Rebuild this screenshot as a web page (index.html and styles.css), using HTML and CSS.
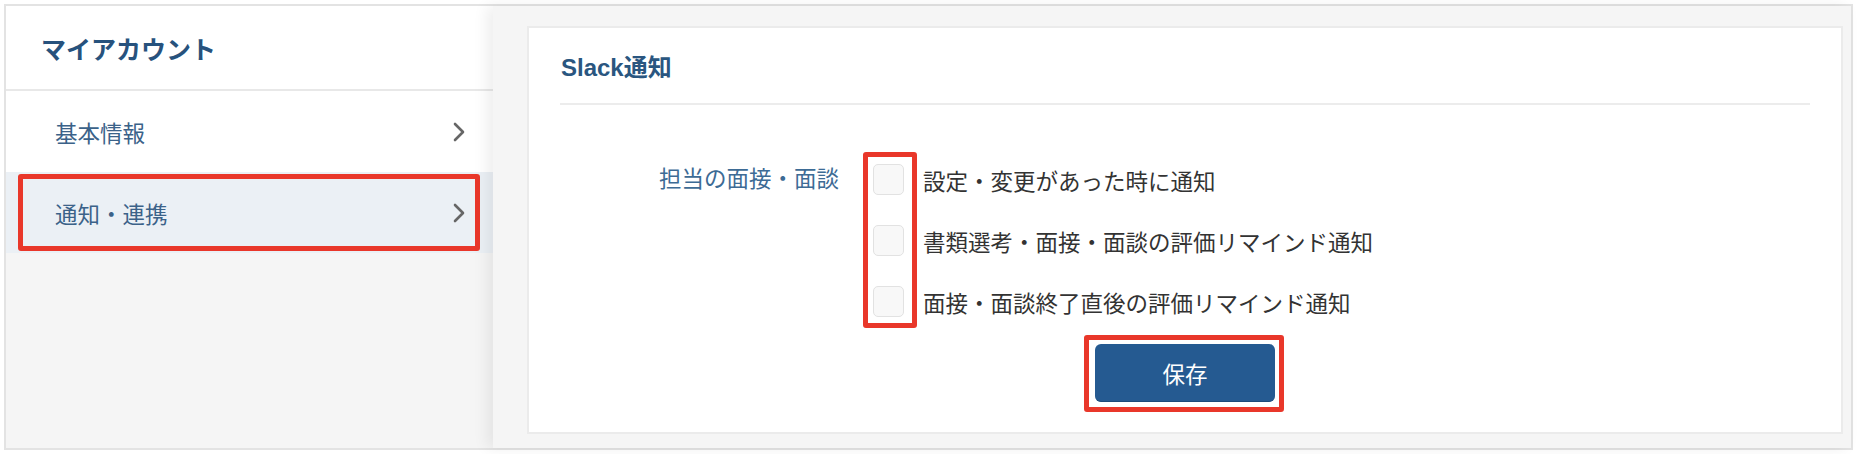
FILE: index.html
```html
<!DOCTYPE html>
<html>
<head>
    <meta charset="utf-8">
	<title>マイアカウント</title>
	<link rel="stylesheet" href="styles.css">
</head>
<body>
	<div class="frame">
		<div class="sidebar">
			<div class="sidebar-title">マイアカウント</div>
			<a class="menu-item">
				<span>基本情報</span>
				<svg class="chevron" width="12" height="20" viewBox="0 0 12 20"><polyline points="2,2 10,10 2,18" fill="none" stroke="#666" stroke-width="2.6" stroke-linecap="round" stroke-linejoin="round"/></svg>
			</a>
			<a class="menu-item active">
				<span>通知・連携</span>
				<svg class="chevron" width="12" height="20" viewBox="0 0 12 20"><polyline points="2,2 10,10 2,18" fill="none" stroke="#666" stroke-width="2.6" stroke-linecap="round" stroke-linejoin="round"/></svg>
				<span class="mark mark-menu"></span>
			</a>
		</div>
		<div class="main">
			<div class="card">
				<h2 class="card-title">Slack通知</h2>
				<form class="notify">
					<div class="notify-row">
						<div class="notify-label">担当の面接・面談</div>
						<div class="options">
							<label class="option"><input type="checkbox" name="changed">設定・変更があった時に通知</label>
							<label class="option"><input type="checkbox" name="review">書類選考・面接・面談の評価リマインド通知</label>
							<label class="option"><input type="checkbox" name="after">面接・面談終了直後の評価リマインド通知</label>
							<span class="mark mark-checks"></span>
						</div>
					</div>
					<div class="actions">
						<div class="save-wrap">
							<button type="submit" class="save">保存</button>
							<span class="mark mark-save"></span>
						</div>
					</div>
				</form>
			</div>
		</div>
	</div>
</body>
</html>
```

FILE: styles.css
```css
body {
	margin: 0;
	padding: 0;
	background-color: #fff;
	font-family: "Liberation Sans", "Noto Sans CJK JP", sans-serif;
	color: #333;
}

.frame {
	margin: 4px;
	width: 1849px;
	height: 446px;
	box-sizing: border-box;
	border: 2px solid #e3e3e3;
	display: flex;
	background-color: #f5f5f5;
}

/* sidebar */
.sidebar {
	width: 487px;
	flex-shrink: 0;
	background-color: #f5f5f5;
}

.sidebar-title {
	height: 83px;
	display: flex;
	align-items: center;
	padding-left: 35px;
	background-color: #fff;
	border-bottom: 2px solid #e8e8e8;
	font-size: 25px;
	font-weight: bold;
	color: #27527d;
}

.menu-item {
	position: relative;
	height: 81px;
	display: flex;
	align-items: center;
	justify-content: space-between;
	padding: 0 28px 0 49px;
	background-color: #fff;
	font-size: 22.5px;
	color: #3b6289;
	cursor: pointer;
}

.menu-item.active {
	background-color: #ebf0f5;
}

.chevron {
	display: block;
}

/* red annotation boxes */
.mark {
	position: absolute;
	box-sizing: border-box;
	border: 5px solid #e9372a;
	border-radius: 3px;
	pointer-events: none;
}

.mark-menu {
	left: 12px;
	right: 13px;
	top: 2px;
	bottom: 2px;
}

.mark-checks {
	left: -10px;
	top: -12px;
	width: 54px;
	height: 176px;
}

.mark-save {
	left: -11px;
	right: -9px;
	top: -9px;
	bottom: -10px;
}

/* main */
.main {
	flex: 1;
	position: relative;
	z-index: 1;
	padding: 20px 8px 14px 34px;
	background-color: #f5f5f5;
	box-shadow: -6px 0 14px rgba(0, 0, 0, 0.07);
}

.card {
	width: 1316px;
	height: 408px;
	box-sizing: border-box;
	padding: 0 31px;
	background-color: #fff;
	border: 2px solid #ebebeb;
}

.card-title {
	margin: 0;
	height: 75px;
	display: flex;
	align-items: center;
	padding-left: 1px;
	border-bottom: 2px solid #ececec;
	font-size: 24px;
	font-weight: bold;
	color: #2a5680;
}

.notify {
	margin-top: 59px;
}

.notify-row {
	display: flex;
	gap: 34px;
}

.notify-label {
	width: 279px;
	text-align: right;
	line-height: 31px;
	font-size: 22.5px;
	color: #3d6b95;
}

.options {
	position: relative;
	display: flex;
	flex-direction: column;
	gap: 30px;
}

.option {
	display: flex;
	align-items: center;
	gap: 19px;
	height: 31px;
	font-size: 22.5px;
	color: #333;
}

.option input[type="checkbox"] {
	appearance: none;
	-webkit-appearance: none;
	margin: 0;
	width: 31px;
	height: 31px;
	box-sizing: border-box;
	border: 1px solid #e2e2e2;
	border-radius: 5px;
	background-color: #f8f8f8;
}

.actions {
	margin-top: 27px;
	display: flex;
	justify-content: center;
}

.save-wrap {
	position: relative;
}

.save {
	display: block;
	width: 180px;
	height: 58px;
	border: none;
	border-bottom: 1px solid #1c4a7a;
	border-radius: 6px;
	background-color: #255a91;
	color: #fff;
	font-family: "Liberation Sans", "Noto Sans CJK JP", sans-serif;
	font-size: 22.5px;
	cursor: pointer;
}
```
